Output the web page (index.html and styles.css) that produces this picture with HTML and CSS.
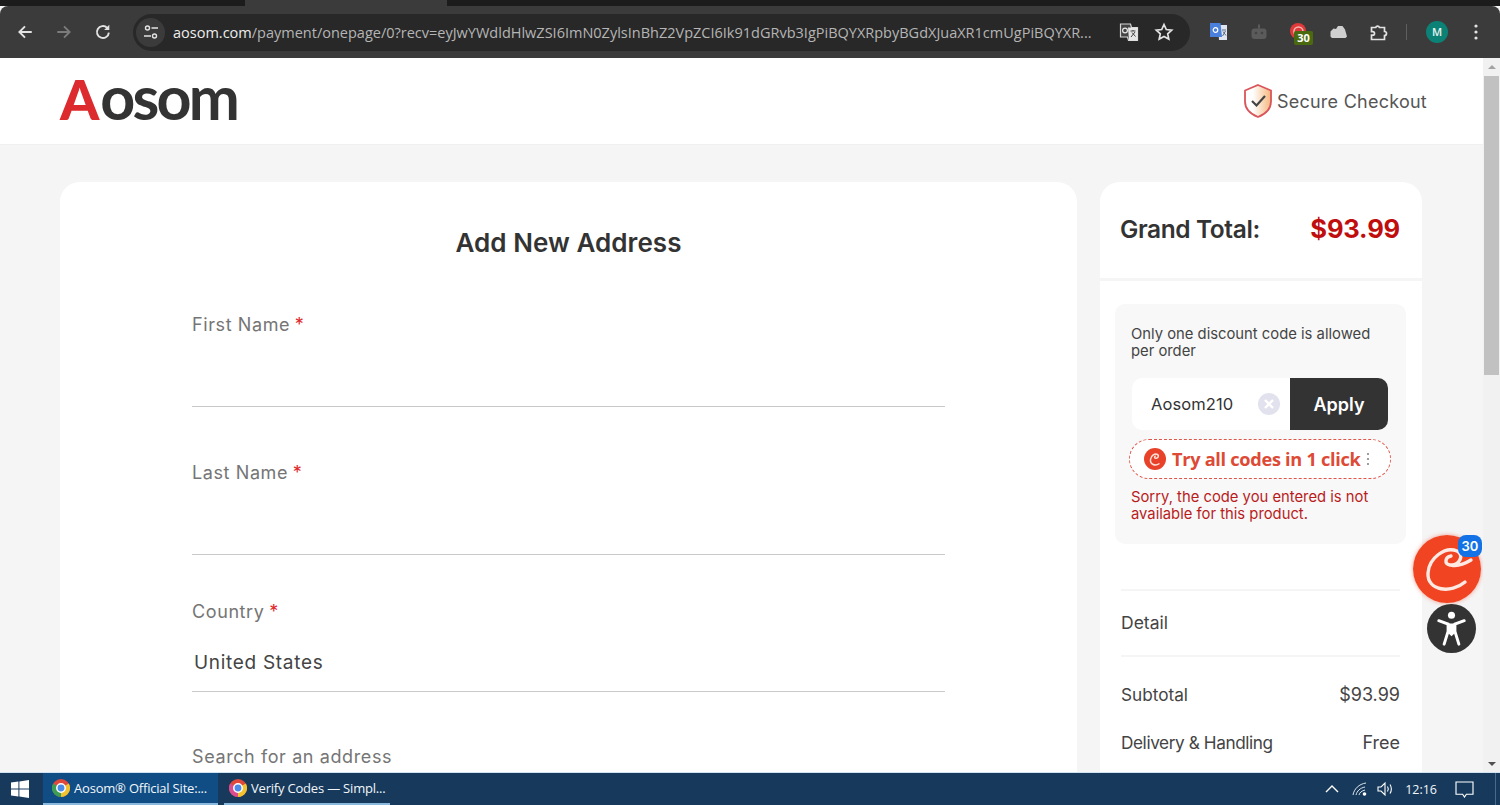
FILE: index.html
```html
<!DOCTYPE html>
<html lang="en">
<head>
<meta charset="utf-8">
<title>Aosom Checkout</title>
<link rel="stylesheet" href="styles.css">
</head>
<body>
<div class="tabstrip"><div class="active-tab"></div></div>
<div class="toolbar">
  <svg class="nav-ico" viewBox="0 0 16 16"><path d="M14 8H3M8 3L3 8l5 5" fill="none" stroke="#e3e3e3" stroke-width="1.7"/></svg>
  <svg class="nav-ico" viewBox="0 0 16 16"><path d="M2 8h11M8 3l5 5-5 5" fill="none" stroke="#7b7b7b" stroke-width="1.7"/></svg>
  <svg class="nav-ico" viewBox="0 0 16 16"><path d="M13.2 8.5A5.3 5.3 0 1 1 11.6 4.2" fill="none" stroke="#e3e3e3" stroke-width="1.7"/><path d="M13.6 1.6v4.6H9z" fill="#e3e3e3"/></svg>
  <div class="omnibox">
    <div class="site-chip">
      <svg viewBox="0 0 16 16" width="16" height="16"><circle cx="4.5" cy="4" r="2" fill="none" stroke="#e3e3e3" stroke-width="1.4"/><path d="M8.5 4H15M1 12h7" stroke="#e3e3e3" stroke-width="1.6"/><circle cx="11.5" cy="12" r="2" fill="none" stroke="#e3e3e3" stroke-width="1.4"/></svg>
    </div>
    <div class="url"><span class="host">aosom.com</span>/payment/onepage/0?recv=eyJwYWdldHlwZSI6ImN0ZylsInBhZ2VpZCI6Ik91dGRvb3IgPiBQYXRpbyBGdXJuaXR1cmUgPiBQYXR...</div>
    <svg class="omni-ico" viewBox="0 0 20 20"><path d="M1.5 2h10l1 3.5h6v13h-9l-1-3.5h-7z" fill="#444" stroke="#d5d5d5" stroke-width="1.2"/><path d="M9 5.500h9.500v13H10z" fill="#e6e6e6"/><path d="M11.500 9h5M14 8v1M12 15l4-5M13 10.500l3.500 4" stroke="#444" stroke-width="1" fill="none"/><circle cx="6" cy="8.500" r="2.400" fill="none" stroke="#e6e6e6" stroke-width="1.200"/></svg>
    <svg class="omni-ico star" viewBox="0 0 20 20"><path d="M10 2.500l2.300 5 5.400.6-4 3.700 1.100 5.300L10 14.400l-4.800 2.700 1.100-5.300-4-3.700 5.400-.6z" fill="none" stroke="#e3e3e3" stroke-width="1.700"/></svg>
  </div>
  <div class="ext-row">
    <svg class="ext" viewBox="0 0 20 20"><path d="M9 3h9v15h-8z" fill="#dfe6f2"/><path d="M1 1h10.500l1.500 14H1z" fill="#4a7fdc"/><circle cx="6.500" cy="8" r="2.300" fill="none" stroke="#fff" stroke-width="1.200"/><path d="M13 8h4M13.500 14l3-5M14 9.500l3 4" stroke="#5c6a80" stroke-width="1"/></svg>
    <svg class="ext" viewBox="0 0 20 20"><rect x="2.500" y="6.500" width="15" height="10.500" rx="3" fill="#5b5b5b"/><rect x="9" y="2.500" width="2" height="4" fill="#5b5b5b"/><circle cx="7" cy="11" r="1.300" fill="#444"/><circle cx="13" cy="11" r="1.300" fill="#444"/></svg>
    <div class="ext-badged">
      <svg class="ext" viewBox="0 0 20 20"><circle cx="9" cy="9" r="8" fill="#e0393a"/><circle cx="9.500" cy="9.500" r="4.500" fill="none" stroke="#f5b8b0" stroke-width="1.600"/></svg>
      <span class="ext-badge">30</span>
    </div>
    <svg class="ext" viewBox="0 0 20 20"><path d="M1.500 14.500V9.500L4.500 6.500l2.500.5 2-3h4.500l2.500 3.500 2 7-1.500 1.500H3z" fill="#cfcfcf"/></svg>
    <svg class="ext" viewBox="0 0 20 20"><path d="M2.500 5.500h4.200a2 2 0 0 1 3.800 0h5v4a2 2 0 0 1 0 4v4h-13v-4.300h1.200a1.800 1.800 0 0 0 0-3.600H2.500z" fill="none" stroke="#e3e3e3" stroke-width="1.700"/></svg>
    <div class="ext-sep"></div>
    <div class="avatar">M</div>
    <svg class="menu-dots" viewBox="0 0 4 16"><circle cx="2" cy="2" r="1.600"/><circle cx="2" cy="8" r="1.600"/><circle cx="2" cy="14" r="1.600"/></svg>
  </div>
</div>

<div class="viewport">
  <div class="page">
    <header class="site-header">
      <div class="logo"><span class="logo-a">A</span><span class="logo-rest">osom</span></div>
      <div class="secure">
        <svg viewBox="2 1 28 34" width="30" height="34"><defs><linearGradient id="sg" x1="0" x2="1"><stop offset="0.300" stop-color="#fff"/><stop offset="1" stop-color="#f5b77d"/></linearGradient></defs><path d="M16 2l13 5.500v11c0 7.500-5.500 12.500-13 15.500C8.500 31 3 26 3 18.500v-11z" fill="url(#sg)" stroke="#d9555a" stroke-width="1.800"/><path d="M10 18l4.500 4.500L23 13" fill="none" stroke="#444" stroke-width="2.200"/></svg>
        <span>Secure Checkout</span>
      </div>
    </header>
    <main class="columns">
      <section class="form-card">
        <h1 class="form-title">Add New Address</h1>
        <div class="form">
          <div class="field"><div class="label">First Name <i>*</i></div><div class="input"></div></div>
          <div class="field field-last"><div class="label">Last Name <i>*</i></div><div class="input"></div></div>
          <div class="field field-country"><div class="label">Country <i>*</i></div><div class="input input-value">United States</div></div>
          <div class="field field-search"><div class="label">Search for an address</div></div>
        </div>
      </section>
      <aside class="summary">
        <div class="grand"><span class="grand-label">Grand Total:</span><span class="grand-price">$93.99</span></div>
        <div class="coupon">
          <p class="coupon-note">Only one discount code is allowed per order</p>
          <div class="coupon-row">
            <span class="coupon-code">Aosom210</span>
            <svg class="coupon-clear" viewBox="0 0 22 22"><circle cx="11" cy="11" r="11" fill="#e2e2ee"/><path d="M7 7l8 8M15 7l-8 8" stroke="#fff" stroke-width="2.400"/></svg>
            <button class="apply">Apply</button>
          </div>
          <div class="tryall">
            <svg viewBox="0 0 22 22" width="22" height="22"><circle cx="11" cy="11" r="11" fill="#e8432a"/><path d="M15.500 15.500C11 18.500 6 16.500 6.500 11.500 7 7.500 11 5 13.500 6.500c2 1.300.5 4-1.800 3.800-1.500-.2-1.500-2 0-2.300" fill="none" stroke="#ffe3da" stroke-width="1.500"/></svg>
            <span class="tryall-text">Try all codes in 1 click</span>
            <svg viewBox="0 0 4 14" width="4" height="14" class="tryall-dots"><circle cx="2" cy="2" r="1.100"/><circle cx="2" cy="7" r="1.100"/><circle cx="2" cy="12" r="1.100"/></svg>
          </div>
          <p class="coupon-error">Sorry, the code you entered is not available for this product.</p>
        </div>
        <div class="detail">Detail</div>
        <div class="row row-subtotal"><span>Subtotal</span><span class="value">$93.99</span></div>
        <div class="row"><span class="tight">Delivery &amp; Handling</span><span class="value">Free</span></div>
      </aside>
    </main>
    <div class="fab">
      <svg viewBox="0 0 68 68" width="68" height="68"><circle cx="34" cy="34" r="34" fill="#f04423"/><path d="M52 47C38 59 14 56 15 38 16 23 32 11 44 16c8 4 2 15-7 14-6-1-5-8 1-9M38 30c8 2 15-2 20-5" fill="none" stroke="#ffeae3" stroke-width="3.400" stroke-linecap="round"/></svg>
      <span class="fab-badge">30</span>
    </div>
    <div class="a11y">
      <svg viewBox="0 0 50 50" width="49" height="49"><circle cx="25" cy="11.500" r="3.600" fill="#fff"/><path d="M12 17l9.500 3.500V29M38 17l-9.500 3.500V29M21.500 28l-4 13M28.500 28l4 13" fill="none" stroke="#fff" stroke-width="3" stroke-linecap="round"/><path d="M21.500 20h7v9.500L25 33l-3.500-3.500z" fill="#fff"/></svg>
    </div>
  </div>
  <div class="scrollbar">
    <div class="arrow-up"></div>
    <div class="thumb"></div>
    <div class="track-fill"></div>
    <div class="arrow-down"></div>
  </div>
</div>

<footer class="taskbar">
  <svg class="start" viewBox="0 0 18 18"><path d="M0 2.600l7.400-1v7H0zM8.400 1.400L18 0v8.600H8.400zM0 9.600h7.400v7L0 15.400zM8.400 9.600H18V18l-9.600-1.400z" fill="#fff"/></svg>
  <div class="task task-active">
    <svg class="chrome" viewBox="0 0 18 18"><circle cx="9" cy="9" r="9" fill="#e0483c"/><path d="M9 9L1.200 4.500A9 9 0 0 0 9 18z" fill="#3c9d54"/><path d="M9 9l7.800-4.500A9 9 0 0 1 9 18z" fill="#f2c230"/><circle cx="9" cy="9" r="4.200" fill="#4c8be8" stroke="#fff" stroke-width="1.500"/></svg>
    <span>Aosom® Official Site:...</span>
  </div>
  <div class="task">
    <svg class="chrome" viewBox="0 0 18 18"><circle cx="9" cy="9" r="9" fill="#e0483c"/><path d="M9 9L1.200 4.500A9 9 0 0 0 9 18z" fill="#d94c8e"/><path d="M9 9l7.800-4.500A9 9 0 0 1 9 18z" fill="#f2c230"/><circle cx="9" cy="9" r="4.200" fill="#4c8be8" stroke="#fff" stroke-width="1.500"/></svg>
    <span>Verify Codes — Simpl...</span>
  </div>
  <div class="tray">
    <svg class="tray-ico tray-up" viewBox="0 0 16 16"><path d="M2 11l6-6 6 6" fill="none" stroke="#fff" stroke-width="1.400"/></svg>
    <svg class="tray-ico tray-net" viewBox="0 0 16 16"><path d="M1 14C2 8 7 3 14 2M4 14c1-4 4-7 9-8M7 14c.6-2.500 2.500-4 6-5" fill="none" stroke="#dfe6ee" stroke-width="1"/><circle cx="12.500" cy="13" r="1.800" fill="#fff"/></svg>
    <svg class="tray-ico" viewBox="0 0 16 16"><path d="M1 6h3l4-4v12l-4-4H1z" fill="none" stroke="#fff" stroke-width="1.100"/><path d="M10.500 5.500c1 1.500 1 3.500 0 5M13 3.500c1.800 2.500 1.800 6.500 0 9" fill="none" stroke="#fff" stroke-width="1.100"/></svg>
    <span class="clock">12:16</span>
    <svg class="notify" viewBox="0 0 20 18"><path d="M1 1h18v13h-7l-2 3-2-3H1z" fill="none" stroke="#fff" stroke-width="1.200"/></svg>
    <div class="show-desktop"></div>
  </div>
</footer>
</body>
</html>
```

FILE: styles.css
```css
* { box-sizing: border-box; }
html, body { margin: 0; padding: 0; height: 805px; overflow: hidden; }
body { display: flex; flex-direction: column; font-family: Inter, "Liberation Sans", sans-serif; color: #333; background: #f5f5f5; }

.tabstrip { height: 6px; background: #1c1c1c; padding-left: 245px; flex: none; }
.active-tab { width: 202px; height: 6px; background: #3b3b3b; }

.toolbar { height: 52px; flex: none; background: #3b3b3b; border-radius: 8px 8px 0 0; display: flex; align-items: center; padding-left: 16px; position: relative; }
.nav-ico { width: 18px; height: 18px; flex: none; margin-right: 21px; }
.nav-ico:nth-child(3) { margin-right: 20px; }
.omnibox { width: 1057px; height: 37px; flex: none; margin-left: 1px; background: #282828; border-radius: 19px; display: flex; align-items: center; padding-left: 3px; }
.site-chip { width: 29px; height: 29px; border-radius: 50%; background: #3b3b3b; display: flex; align-items: center; justify-content: center; flex: none; }
.url { width: 938px; margin-left: 8px; font: 14.500px "Open Sans", sans-serif; color: #b5b5b5; white-space: nowrap; overflow: hidden; flex: none; }
.host { color: #ededed; }
.omni-ico { width: 20px; height: 20px; flex: none; margin-left: 8px; }
.omni-ico.star { margin-left: 15px; }

.ext-row { display: flex; align-items: center; margin-left: 19px; }
.ext { width: 20px; height: 20px; flex: none; display: block; }
.ext-row > .ext, .ext-badged { margin-right: 20px; }
.ext-badged { position: relative; width: 20px; height: 20px; }
.ext-badge { position: absolute; left: 5px; top: 9px; width: 19px; height: 14px; border-radius: 2px; background: #4b6a10; color: #fff; font: 700 11px/14px "Open Sans", sans-serif; text-align: center; }
.ext-sep { width: 1px; height: 16px; background: #5f5f5f; margin-left: -3px; }
.avatar { width: 22px; height: 22px; border-radius: 50%; background: #0c8277; color: #e9f3f1; font: 600 11px/22px "Open Sans", sans-serif; text-align: center; margin-left: 19px; }
.menu-dots { width: 4px; height: 16px; margin-left: 26px; fill: #e3e3e3; }

.viewport { flex: 1; min-height: 0; display: flex; overflow: hidden; }
.page { width: 1483px; flex: none; position: relative; overflow: hidden; background: #f5f5f5; }
.scrollbar { width: 17px; flex: none; background: #f1f1f1; display: flex; flex-direction: column; align-items: center; }
.arrow-up, .arrow-down { width: 0; height: 0; flex: none; border-left: 4px solid transparent; border-right: 4px solid transparent; }
.arrow-up { border-bottom: 4px solid #a3a3a3; margin: 7px 0 7px; }
.thumb { width: 15px; height: 299px; background: #c1c1c1; flex: none; }
.track-fill { flex: 1; }
.arrow-down { border-top: 4px solid #505050; margin: 0 0 6px; }

.site-header { height: 87px; background: #fff; border-bottom: 1px solid #f0f0f0; display: flex; align-items: center; justify-content: space-between; padding: 0 56px 0 60px; }
.logo { display: flex; align-items: baseline; font-family: Lato, sans-serif; font-weight: 700; line-height: 1; margin-bottom: 9px; }
.logo-a { color: #dc2a2e; font-size: 56px; font-weight: 900; }
.logo-rest { color: #333; font-size: 61px; letter-spacing: -2.800px; margin-left: 1px; }
.secure { display: flex; align-items: center; gap: 4px; font-size: 18px; letter-spacing: 0.25px; color: #555; margin-left: auto; }

.columns { display: flex; align-items: flex-start; gap: 23px; padding: 37px 0 0 60px; }
.form-card { width: 1017px; height: 900px; flex: none; background: #fff; border-radius: 20px; padding: 44px 132px 0; }
.form-title { margin: 0 0 0 -132px; width: 1017px; text-align: center; font-size: 26px; line-height: 34px; font-weight: 600; letter-spacing: 0.05px; color: #333; }
.form { margin-top: 53px; width: 753px; }
.label { font-size: 18px; line-height: 24px; letter-spacing: 0.6px; color: #757575; }
.label i { font-style: normal; color: #e0272b; margin-left: -1px; }
.input { height: 70px; border-bottom: 1px solid #c9c9c9; }
.input-value { height: 68px; padding: 27px 0 0 2px; font-size: 19px; line-height: 24px; letter-spacing: 0.7px; color: #444; }
.field-last { margin-top: 54px; }
.field-country { margin-top: 45px; }
.field-search { margin-top: 53px; }

.summary { width: 322px; height: 900px; flex: none; background: #fff; border-radius: 20px; }
.grand { height: 99px; padding: 0 22px 3px 20px; border-bottom: 3px solid #f5f5f5; display: flex; align-items: center; justify-content: space-between; }
.grand-label { font-size: 24.500px; font-weight: 600; letter-spacing: -0.4px; color: #333; }
.grand-price { font-size: 25.600px; font-weight: 700; color: #c00d0d; letter-spacing: -0.2px; }
.coupon { margin: 23px 16px 0 15px; height: 240px; background: #f8f8f8; border-radius: 10px; padding: 22px 15px 0 16px; }
.coupon-note { margin: 0; font-size: 14.800px; line-height: 17px; color: #444; }
.coupon-row { margin: 18px 3px 0 1px; height: 52px; background: #fff; border-radius: 10px; display: flex; align-items: center; }
.coupon-code { font-size: 16.500px; color: #333; margin-left: 19px; width: 107px; flex: none; letter-spacing: 0.1px; }
.coupon-clear { width: 22px; height: 22px; flex: none; }
.apply { margin-left: auto; width: 98px; height: 52px; border: 0; background: #333; color: #fff; font: 600 18px Inter, sans-serif; border-radius: 0 10px 10px 0; }
.tryall { margin: 9px 0 0 -2px; height: 40px; border: 1px dashed #e05548; border-radius: 20px; background: #fff; display: flex; align-items: center; padding-left: 14px; }
.tryall-text { font: 700 18.200px "Open Sans", sans-serif; line-height: 22px; color: #dd4a35; margin: -1px 0 0 6px; letter-spacing: -0.3px; white-space: nowrap; }
.tryall-dots { margin-left: 5px; fill: #888; flex: none; }
.coupon-error { margin: 10px 0 0; font-size: 14.800px; line-height: 17px; color: #b81c1c; }
.detail { margin: 45px 22px 0 21px; height: 68px; border-top: 2px solid #f5f5f5; border-bottom: 2px solid #f5f5f5; font-size: 17.500px; line-height: 64px; color: #444; }
.row { margin: 0 22px 0 21px; height: 48px; display: flex; align-items: center; justify-content: space-between; font-size: 17.200px; color: #444; }
.row-subtotal { margin-top: 13px; }
.value { font-size: 18px; }
.tight { letter-spacing: -0.4px; }

.fab { position: absolute; left: 1413px; top: 477px; width: 68px; height: 68px; border-radius: 50%; box-shadow: 0 0 4px rgba(240, 68, 35, .5); }
.fab svg { display: block; }
.fab-badge { position: absolute; left: 45px; top: 0; width: 24px; height: 22px; border-radius: 8px; background: #1272e6; color: #fff; font: 600 13px/22px Inter, sans-serif; text-align: center; }
.a11y { position: absolute; left: 1427px; top: 546px; width: 49px; height: 49px; border-radius: 50%; background: #333; }
.a11y svg { display: block; }

.taskbar { height: 33px; flex: none; background: #173a5c; border-top: 1px solid #cfe3f2; display: flex; align-items: stretch; font: 13px "Open Sans", sans-serif; color: #f2f6fa; }
.start { width: 18px; height: 18px; margin: 7px 14px 0 11px; flex: none; }
.task { width: 166px; margin-left: 6px; display: flex; align-items: center; padding-left: 5px; gap: 4px; border-bottom: 2px solid #8ab9dd; white-space: nowrap; letter-spacing: -0.2px; }
.task-active { width: 175px; margin-left: 0; padding-left: 9px; background: #0f4d84; }
.chrome { width: 18px; height: 18px; flex: none; }
.tray { margin-left: auto; display: flex; align-items: center; }
.tray-ico { width: 16px; height: 16px; margin-right: 10px; flex: none; }
.tray-up { margin-right: 12px; }
.tray-net { margin-right: 9px; }
.clock { font-size: 12.500px; margin: 0 18px 0 2px; }
.notify { width: 19px; height: 17px; margin-right: 21px; flex: none; }
.show-desktop { width: 1px; height: 100%; background: #4a6a88; margin-right: 4px; }
```
